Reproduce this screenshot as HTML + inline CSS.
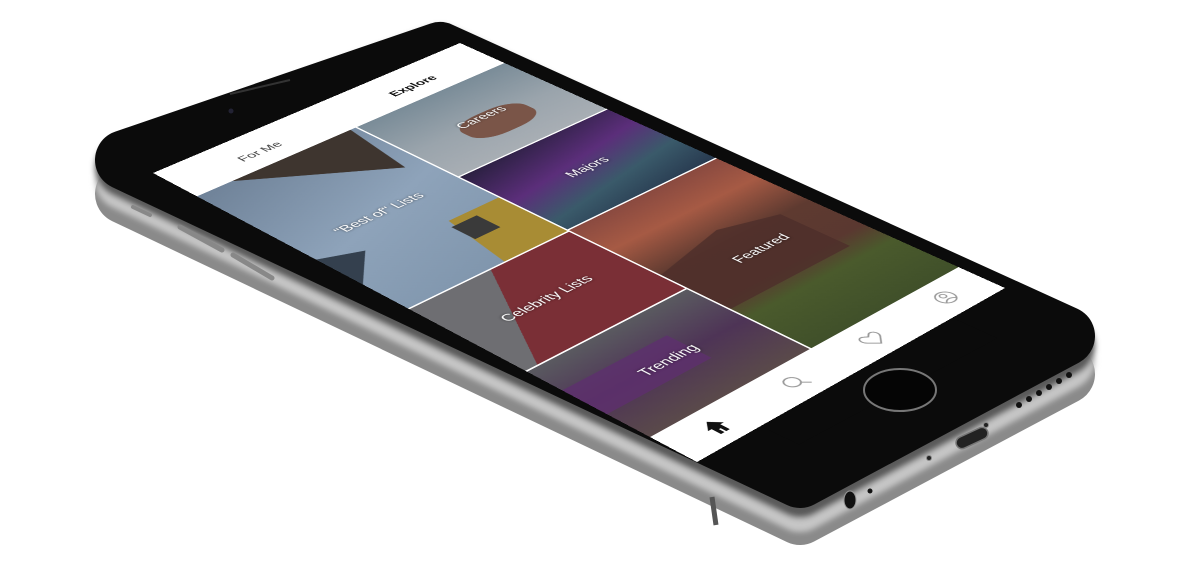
<!DOCTYPE html>
<html><head><meta charset="utf-8"><style>
html,body{margin:0;padding:0;background:#fff;width:1200px;height:566px;overflow:hidden;font-family:"Liberation Sans",sans-serif}
#ph{position:absolute;left:0;top:0}
#scr{position:absolute;left:0;top:0;width:375px;height:667px;background:#fff;transform-origin:0 0;
transform:matrix3d(0.91504,-0.33765,0,0.00020949,0.66694,0.33476,0,-0.00021329,0,0,1,0,153,173,0,1);overflow:hidden}
.t{position:absolute;overflow:hidden}
.l{position:absolute;left:0;right:0;top:50%;transform:translateY(-50%);text-align:center;color:#fff;font-size:16px;text-shadow:0 0 3px rgba(0,0,0,.6)}
.sh{position:absolute;}
.hd{position:absolute;top:28px;font-size:15px;color:#444;text-align:center;width:120px}
</style></head><body>
<svg id="ph" width="1200" height="566" viewBox="0 0 1200 566">
<defs>
<filter id="bl"><feGaussianBlur stdDeviation="3"/></filter>
</defs>
<polygon points="125,194 440,72 1065,374 800,515" fill="#8a8a8a" stroke="#8a8a8a" stroke-width="60" stroke-linejoin="round"/>
<g filter="url(#bl)">
<polygon points="125,180 440,62 1065,360 800,502" fill="#c6c6c6" stroke="#c6c6c6" stroke-width="60" stroke-linejoin="round"/>
<polygon points="125,168 440,56 1065,346 800,488" fill="#5a5a5a" stroke="#5a5a5a" stroke-width="60" stroke-linejoin="round"/>
</g>
<polygon points="125,160 440,52 1065,336 800,478" fill="#0b0b0b" stroke="#0b0b0b" stroke-width="60" stroke-linejoin="round"/>
<line x1="230" y1="94" x2="290" y2="80" stroke="#333" stroke-width="2"/>
<circle cx="231" cy="111" r="2.5" fill="#223"/>
<ellipse cx="900" cy="390" rx="36" ry="21" fill="#050505" stroke="#777" stroke-width="2"/>
<rect x="955" y="432" width="34" height="12" rx="6" fill="#222" stroke="#777" stroke-width="1.5" transform="rotate(-25 972 438)"/>
<circle cx="929" cy="458" r="2.5" fill="#222" stroke="#888"/>
<circle cx="986" cy="425" r="2.5" fill="#222" stroke="#888"/>
<ellipse cx="850" cy="500" rx="6" ry="9" fill="#111" stroke="#999"/>
<circle cx="870" cy="491" r="2.5" fill="#111"/>
<g fill="#111"><circle cx="1019" cy="405" r="3"/><circle cx="1029" cy="399" r="3"/><circle cx="1039" cy="393" r="3"/><circle cx="1049" cy="387" r="3"/><circle cx="1059" cy="381" r="3"/><circle cx="1069" cy="375" r="3"/></g>
<path d="M133,207 L150,215" stroke="#888" stroke-width="4" stroke-linecap="round"/>
<path d="M180,227 L222,250" stroke="#888" stroke-width="5" stroke-linecap="round"/>
<path d="M233,255 L272,278" stroke="#888" stroke-width="5" stroke-linecap="round"/>
<path d="M712,497 L716,525" stroke="#555" stroke-width="5"/>
</svg>
<div id="scr">
<div class="hd" style="left:34px">For Me</div>
<div class="hd" style="left:221px;font-weight:bold;color:#111">Explore</div>

<div class="t" style="left:0;top:62px;width:186px;height:276px;background:linear-gradient(160deg,#6f8298,#8ea3ba 50%,#7d93aa)">
 <div class="sh" style="left:40px;top:0;width:140px;height:90px;background:#3e352f;clip-path:polygon(0 0,100% 0,90% 100%)"></div>
 <div class="sh" style="left:0;top:160px;width:40px;height:60px;background:#34404e;clip-path:polygon(0 0,100% 30%,0 100%)"></div>
 <div class="sh" style="left:110px;top:190px;width:80px;height:90px;background:#a88c34;clip-path:polygon(20% 0,100% 0,100% 100%,0 100%)"></div>
 <div class="sh" style="left:120px;top:200px;width:30px;height:30px;background:#3a3a3a"></div>
 <div class="l">"Best of" Lists</div></div>
<div class="t" style="left:0;top:340px;width:186px;height:138px;background:linear-gradient(120deg,#6e6e72 0 35%,#7a2f36 35% 100%)">
 <div class="l">Celebrity Lists</div></div>
<div class="t" style="left:0;top:480px;width:186px;height:137px;background:linear-gradient(180deg,#5a5a60,#4e3456 50%,#5a4a4a)">
 <div class="sh" style="left:0;top:40px;width:120px;height:50px;background:#5e2f6e;opacity:.8"></div>
 <div class="l">Trending</div></div>
<div class="t" style="left:188px;top:62px;width:187px;height:136px;background:linear-gradient(180deg,#7a8c98,#9aa4ac 55%,#a8aeb4)">
 <div class="sh" style="left:60px;top:60px;width:80px;height:45px;border-radius:40%;background:#7a5548"></div>
 <div class="l">Careers</div></div>
<div class="t" style="left:188px;top:200px;width:187px;height:136px;background:linear-gradient(170deg,#2a2040,#5b2e7a 40%,#3a5a6a 70%,#283a50)">
 <div class="l">Majors</div></div>
<div class="t" style="left:188px;top:338px;width:187px;height:279px;background:linear-gradient(180deg,#8a4a40,#a65a44 18%,#5e3a30 40%,#5a3830 62%,#4a5a2c 75%,#40502a)">
 <div class="sh" style="left:0;top:90px;width:150px;height:100px;background:#4e2e2a;opacity:.8;clip-path:polygon(0 20%,60% 0,100% 20%,100% 100%,0 100%)"></div>
 <div class="l">Featured</div></div>

<svg style="position:absolute;left:0;top:617px" width="375" height="50">
<path d="M38,26 L47,16 L56,26 L52,26 L52,36 L48,36 L48,30 L46,30 L46,36 L42,36 L42,26 Z" fill="#111"/>
<circle cx="138" cy="24" r="7" fill="none" stroke="#999" stroke-width="1.5"/><line x1="143" y1="29" x2="149" y2="35" stroke="#999" stroke-width="1.5"/>
<path d="M234,35 L226,27 C222,23 225,16 230,18 L234,21 L238,18 C243,16 246,23 242,27 Z" fill="none" stroke="#999" stroke-width="1.5"/>
<circle cx="328" cy="25" r="9" fill="none" stroke="#999" stroke-width="1.5"/><circle cx="328" cy="22" r="3" fill="none" stroke="#999" stroke-width="1.3"/><path d="M322,31 Q328,25 334,31" fill="none" stroke="#999" stroke-width="1.3"/>
</svg>
</div>
</body></html>
